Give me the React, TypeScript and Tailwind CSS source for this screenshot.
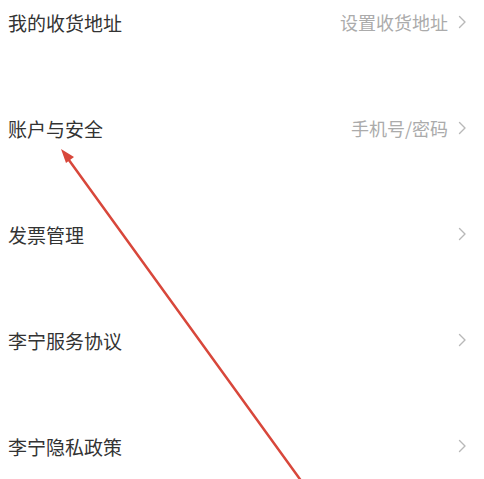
import React from 'react';

type Row = { label: string; hint?: string };

const rows: Row[] = [
  { label: '我的收货地址', hint: '设置收货地址' },
  { label: '账户与安全', hint: '手机号/密码' },
  { label: '发票管理' },
  { label: '李宁服务协议' },
  { label: '李宁隐私政策' },
];

const Chevron: React.FC = () => (
  <svg width="9" height="14" viewBox="0 0 9 14" fill="none">
    <polyline points="1.5,1.5 7,7 1.5,12.5" stroke="#b8b8b8" strokeWidth="1.4" strokeLinecap="round" strokeLinejoin="round" />
  </svg>
);

const App: React.FC = () => {
  return (
    <div
      className="relative w-[484px] h-[479px] overflow-hidden bg-white"
      style={{ fontFamily: '"Noto Sans CJK SC", "Noto Sans", sans-serif' }}
    >
      <div className="-mt-[31px] flex flex-col">
        {rows.map((row) => (
          <div key={row.label} className="h-[106px] flex items-center justify-between pl-[8px] pr-[17px]">
            <span className="text-[19px] text-[#333333] leading-none">{row.label}</span>
            <div className="flex items-center gap-[10px]">
              {row.hint && <span className="text-[18px] text-[#ababab] leading-none">{row.hint}</span>}
              <Chevron />
            </div>
          </div>
        ))}
      </div>

      {/* red annotation arrow */}
      <svg className="absolute inset-0 pointer-events-none" width="484" height="479" viewBox="0 0 484 479">
        <line x1="302" y1="482" x2="66" y2="156" stroke="#d8473b" strokeWidth="2.5" strokeLinecap="round" />
        <polygon points="61,149 74,157 66,163" fill="#d8473b" />
      </svg>
    </div>
  );
};

export default App;
